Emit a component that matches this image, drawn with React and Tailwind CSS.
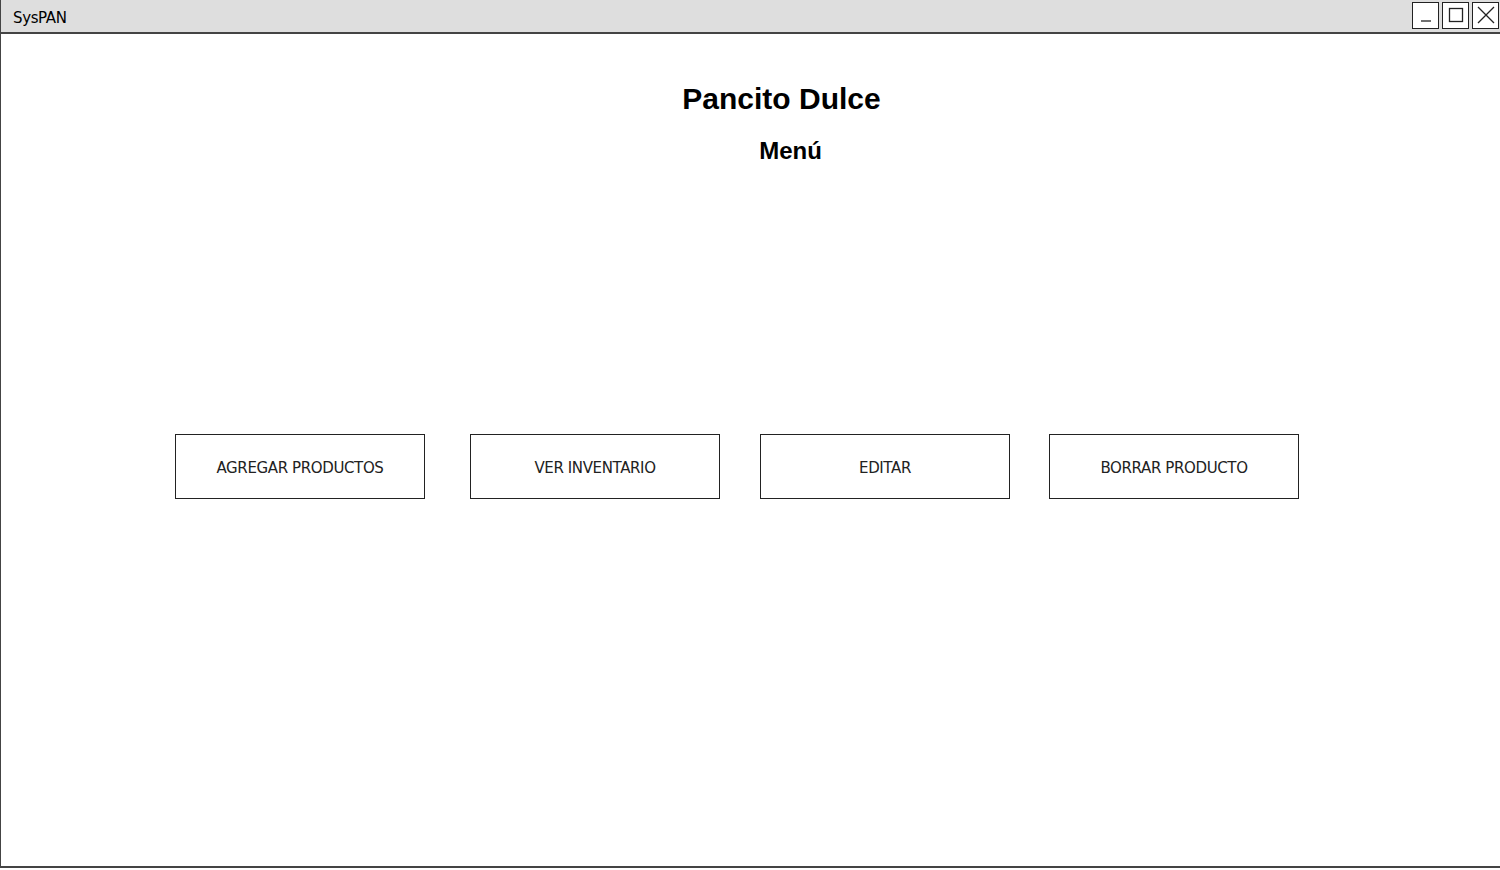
const BUTTONS = [
  { label: 'AGREGAR PRODUCTOS', ml: 'ml-[174px]' },
  { label: 'VER INVENTARIO', ml: 'ml-[45px]' },
  { label: 'EDITAR', ml: 'ml-[40px]' },
  { label: 'BORRAR PRODUCTO', ml: 'ml-[39px]' },
]

function WinButton({ children }) {
  return (
    <div className="w-[27px] h-[27px] border border-[#222] bg-white flex items-center justify-center">
      {children}
    </div>
  )
}

export default function App() {
  return (
    <div className="w-[1500px] h-[870px] bg-white font-['Liberation_Sans',Arial,sans-serif] text-black">
      <div className="h-[868px] border-l border-b-2 border-[#444] flex flex-col">
        {/* title bar */}
        <div className="h-[34px] bg-[#dedede] border-b-2 border-[#444] flex items-center justify-between pl-[12px] pr-[1px]">
          <span className="text-[15px] pt-[5px] font-['DejaVu_Sans',sans-serif] font-medium tracking-tight">SysPAN</span>
          <div className="flex gap-[3px] -mt-[2px]">
            <WinButton>
              <svg width="20" height="20" viewBox="0 0 20 20"><path d="M5 16h10" stroke="#222" strokeWidth="1.3" /></svg>
            </WinButton>
            <WinButton>
              <svg width="20" height="20" viewBox="0 0 20 20"><rect x="3.5" y="3.5" width="13" height="13" fill="none" stroke="#222" strokeWidth="1.3" /></svg>
            </WinButton>
            <WinButton>
              <svg width="22" height="22" viewBox="0 0 22 22"><path d="M3 3L19 19M19 3L3 19" stroke="#222" strokeWidth="1.3" /></svg>
            </WinButton>
          </div>
        </div>

        {/* headings */}
        <div className="flex flex-col items-center pt-[47px]">
          <h1 className="text-[30px] font-bold leading-[36px] ml-[62px]">Pancito Dulce</h1>
          <h2 className="text-[24px] font-bold leading-[30px] mt-[19px] ml-[80px]">Menú</h2>
        </div>

        {/* menu buttons */}
        <div className="flex mt-[268px]">
          {BUTTONS.map(b => (
            <div
              key={b.label}
              className={`${b.ml} w-[250px] h-[65px] pt-[4px] border border-[#222] flex items-center justify-center text-[15px] font-['DejaVu_Sans',sans-serif] tracking-tight text-[#222]`}
            >
              {b.label}
            </div>
          ))}
        </div>
      </div>
    </div>
  )
}
